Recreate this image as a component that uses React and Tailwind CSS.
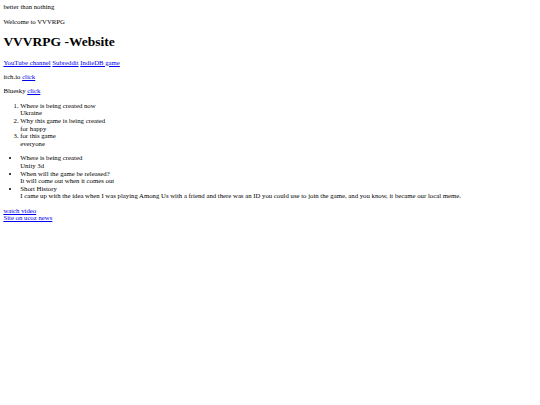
import React from "react";

const linkCls = "text-[#0000ee] underline";

export default function App() {
  return (
    <div className="min-h-screen bg-white text-black font-['Liberation_Serif',serif] text-[6.75px] leading-[1.13] p-[0.5em]">
      <p className="my-[1em] first:mt-0">better than nothing</p>
      <p className="my-[1em]">Welcome to VVVRPG</p>
      <h1 className="text-[2em] font-bold my-[0.67em]">VVVRPG -Website</h1>
      <p className="my-[1em]">
        <a href="#" className={linkCls}>YouTube channel</a>{" "}
        <a href="#" className={linkCls}>Subreddit</a>{" "}
        <a href="#" className={linkCls}>IndieDB game</a>
      </p>
      <p className="my-[1em]">
        itch.io <a href="#" className={linkCls}>click</a>
      </p>
      <p className="my-[1em]">
        Bluesky <a href="#" className={linkCls}>click</a>
      </p>
      <ol className="list-decimal pl-[2.5em] my-[1em]">
        <li>
          Where is being created now
          <br />
          Ukraine
        </li>
        <li>
          Why this game is being created
          <br />
          for happy
        </li>
        <li>
          for this game
          <br />
          everyone
        </li>
      </ol>
      <ul className="list-disc pl-[2.5em] my-[1em]">
        <li>
          Where is being created
          <br />
          Unity 3d
        </li>
        <li>
          When will the game be released?
          <br />
          It will come out when it comes out
        </li>
        <li>
          Short History
          <br />
          I came up with the idea when I was playing Among Us with a friend and there was an ID you could use to join the game, and you know, it became our local meme.
        </li>
      </ul>
      <div>
        <a href="#" className={linkCls}>watch video</a>
        <br />
        <a href="#" className={linkCls}>Site on ucoz news</a>
      </div>
    </div>
  );
}
